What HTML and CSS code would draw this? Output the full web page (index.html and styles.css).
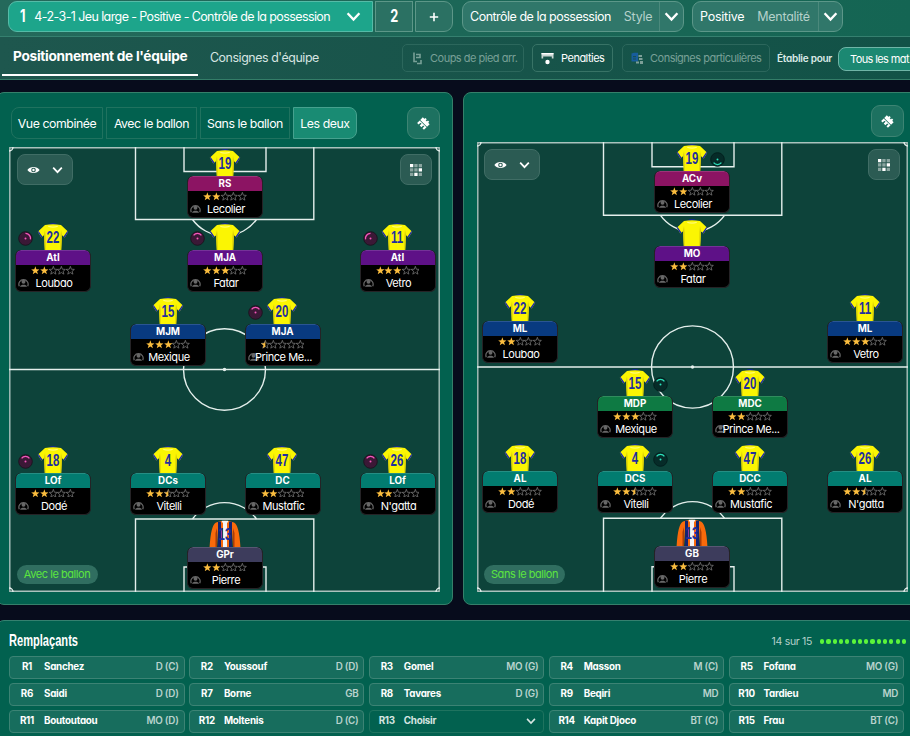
FILE: index.html
```html
<!DOCTYPE html>
<html lang="fr">
<head>
  <meta charset="UTF-8" />
  <meta name="viewport" content="width=device-width, initial-scale=1.0" />
  <title>Tactique</title>
  <link rel="stylesheet" href="styles.css">
</head>
<body>
  <svg class="defs" width="0" height="0">
    <defs>
      <symbol id="chevron" viewBox="0 0 14 10">
        <path d="M1.5 2 L7 7.8 L12.5 2" fill="none" stroke="currentColor" stroke-width="2.2"/>
      </symbol>
      <symbol id="eye" viewBox="0 0 14 8">
        <path fill-rule="evenodd" fill="currentColor" d="M.4 4 C3-.4 11-.4 13.6 4 C11 8.4 3 8.4 .4 4Z M7 1.5 A2.5 2.5 0 1 0 7 6.5 A2.5 2.5 0 1 0 7 1.5Z"/>
        <circle cx="7" cy="4" r="1.3" fill="currentColor"/>
      </symbol>
      <symbol id="dots" viewBox="0 0 12 12">
        <g fill="#fff">
          <path d="M0 0h3.3v3.3H0z M8.7 4.3H12v3.3H8.7z M4.3 8.7h3.3V12H4.3z"/>
          <path opacity=".45" d="M4.3 0h3.3v3.3H4.3z M8.7 0H12v3.3H8.7z M0 4.3h3.3v3.3H0z M4.3 4.3h3.3v3.3H4.3z M0 8.7h3.3V12H0z M8.7 8.7H12V12H8.7z"/>
        </g>
      </symbol>
      <symbol id="brush" viewBox="0 0 14 14">
        <g transform="rotate(45 7 7)" fill="#fff">
          <path d="M2.5 3.4h9v3.4h-9z M2.5 7.5h9v1h-9z M2.5 8.5h2v2.4h-2z M5.9 8.5h2.2v2.4H5.9z M9.5 8.5h2v2.4h-2z M4.6 2h1.7v1.6H4.6z M7.9 2h1.7v1.6H7.9z"/>
        </g>
      </symbol>
      <symbol id="head" viewBox="0 0 10 10">
        <path d="M1.2 8.4 A4.2 4.2 0 1 1 8.8 8.4" fill="none" stroke="#686868" stroke-width="1.1"/>
        <circle cx="5" cy="4.4" r="1.8" fill="#686868"/>
        <path d="M1.8 8.8 C2.6 6.4 7.4 6.4 8.2 8.8Z" fill="#686868"/>
      </symbol>
      <symbol id="star" viewBox="0 0 10 10">
        <path d="M5 .4 L6.2 3.7 L9.8 3.9 L7 6.1 L8 9.5 L5 7.5 L2 9.5 L3 6.1 L.2 3.9 L3.8 3.7Z"/>
      </symbol>
      <symbol id="shirt" viewBox="0 0 32 27">
        <path d="M11 1.6 Q16-.9 21 1.6Z" fill="#1622b4"/>
        <path d="M8 2 L.8 8.7 L4.3 14.6 L7 12.2 L7.8 27 H24.2 L25 12.2 L27.7 14.6 L31.2 8.7 L24 2 Q16 .3 8 2Z" fill="#fbf503"/>
        <path d="M.8 8.7 L4.3 14.6 L5.4 13.6 L1.6 7.9Z M31.2 8.7 L27.7 14.6 L26.6 13.6 L30.4 7.9Z" fill="#1622b4"/>
        <path d="M7 12.2 L8 7 L8.5 13 L8.6 27 H7.8Z M25 12.2 L24 7 L23.5 13 L23.4 27 H24.2Z" fill="#d5c90a"/>
        <path d="M11 3.8 Q16 5.8 21 3.8 L20.5 2.8 Q16 4.4 11.5 2.8Z" fill="#fffb70"/>
      </symbol>
      <symbol id="keeper" viewBox="0 0 32 27">
        <path d="M7 2.4 Q1.8 5 .6 27 H8 V10 L9 27 H23 L24 10 V27 H31.4 Q30.2 5 25 2.4 Q16-.8 7 2.4Z" fill="#f96a0b"/>
        <path d="M6.5 13 L8 8 V27 H6.5Z M25.5 13 L24 8 V27 H25.5Z" fill="#a83d08"/>
        <path d="M9 1.8h3V27H9z M20 1.8h3V27h-3z" fill="#13246e"/>
        <path d="M12 1.2h2V27h-2z M18 1.2h2V27h-2z" fill="#f96a0b"/>
        <path d="M14 .8h4V27h-4z M12.8.8h6.4v1.6h-6.4z" fill="#f4f4f4"/>
      </symbol>
    </defs>
  </svg>

  <header class="topbar">
    <div class="formations">
      <button class="formation active"><span class="slot">1</span><span class="formation-name">4-2-3-1 Jeu large - Positive - Contrôle de la possession</span><svg class="chev"><use href="#chevron"/></svg></button>
      <button class="formation small"><span class="slot">2</span></button>
      <button class="formation small last"><svg class="plus" viewBox="0 0 10 10"><path d="M5 .8V9.2M.8 5H9.2"/></svg></button>
    </div>
    <div class="picker style"><span class="value">Contrôle de la possession</span><span class="kind">Style</span><span class="drop"><svg class="chev"><use href="#chevron"/></svg></span></div>
    <div class="picker mentality"><span class="value">Positive</span><span class="kind">Mentalité</span><span class="drop"><svg class="chev"><use href="#chevron"/></svg></span></div>
  </header>

  <nav class="subbar">
    <a class="tab active"><span>Positionnement de l'équipe</span></a>
    <a class="tab"><span>Consignes d'équipe</span></a>
    <button class="action corners off">
      <svg width="9" height="13" viewBox="0 0 9 13"><path d="M1 .5V9.5H4M3 2.5H7V5.5H3M8 8V11.5H4" fill="none" stroke="currentColor" stroke-width="1.6"/></svg>
      <span>Coups de pied arr.</span>
    </button>
    <button class="action penalties">
      <svg width="13" height="13" viewBox="0 0 13 13"><path d="M.5 1H12.5V6.5H10.8V4.5H2.2V6.5H.5Z" fill="#c9d5d2"/><path d="M.5 1H12.5V2.4H.5Z" fill="#fff"/><circle cx="6.5" cy="10" r="2.2" fill="#fff"/></svg>
      <span>Penalties</span>
    </button>
    <button class="action special off">
      <svg width="13" height="13" viewBox="0 0 13 13"><path d="M.5 1.5L3 .8H7V9.5H.5Z" fill="#175d9c"/><path d="M2 4h3v1.2H2z M2 6.5h3v1H2z" fill="#174f55"/><path d="M7.5 3H11v2H7.5z M8 6h3.5v2H8z M5 9.5h3v2H5z M9 9h3v3H9z" fill="#7d9f98"/></svg>
      <span>Consignes particulières</span>
    </button>
    <span class="set-for">Établie pour</span>
    <button class="matches">Tous les mat</button>
  </nav>

  <main class="boards">
    <section class="panel with-ball">
      <div class="panel-head">
        <div class="views">
          <button class="v1"><span>Vue combinée</span></button>
          <button class="v2"><span>Avec le ballon</span></button>
          <button class="v3"><span>Sans le ballon</span></button>
          <button class="v4 active"><span>Les deux</span></button>
        </div>
        <button class="square"><svg width="15" height="15"><use href="#brush"/></svg></button>
      </div>
      <div class="pitch" id="pitch-with"></div>
    </section>

    <section class="panel without-ball">
      <div class="panel-head">
        <button class="square"><svg width="15" height="15"><use href="#brush"/></svg></button>
      </div>
      <div class="pitch" id="pitch-without"></div>
    </section>
  </main>

  <section class="subs">
    <div class="subs-head">
      <h2><svg width="74" height="22"><text x="0" y="16" textLength="69" lengthAdjust="spacingAndGlyphs">Remplaçants</text></svg></h2>
      <span class="count">14 sur 15</span>
      <div class="pips" id="pips"></div>
    </div>
    <div class="subs-grid" id="subs"></div>
  </section>

  <script src="script.js"></script>
</body>
</html>
```

FILE: styles.css
```css
* {
  box-sizing: border-box;
}

body {
  margin: 0;
  width: 910px;
  height: 736px;
  overflow: hidden;
  background: #070c1c;
  color: #fff;
  font-family: Inter, "Liberation Sans", sans-serif;
  font-feature-settings: "cv11";
  font-size: 12px;
}

button {
  font: inherit;
  font-feature-settings: inherit;
  color: inherit;
  background: none;
  border: 1px solid;
  padding: 0;
  display: flex;
  align-items: center;
  white-space: nowrap;
}

svg {
  display: block;
  flex: none;
}

.defs {
  position: absolute;
}

/* top bar */
.topbar {
  display: flex;
  height: 37px;
  padding: 1px 8px 0;
  background: linear-gradient(90deg, #24695b, #146553);
  border-bottom: 1px solid #35806f;
}

.formations {
  display: flex;
  gap: 2px;
  margin-right: 9px;
}

.formation {
  height: 31px;
  border-color: #5d9788;
  background: #2b7163;
}

.formation.active {
  width: 365px;
  padding: 0 11px 0 10px;
  background: #1da58b;
  border-color: #55bba7;
  border-radius: 9px 0 0 9px;
}

.formation.small {
  width: 38px;
  justify-content: center;
}

.formation.last {
  border-radius: 0 9px 9px 0;
}

.slot {
  font-weight: 700;
  font-size: 17px;
  transform: scaleX(.75);
  margin-top: -2px;
}

.formation-name {
  margin-left: 8px;
  font-size: 12.5px;
  letter-spacing: -.6px;
}

.formation.active .chev {
  margin-left: auto;
}

.chev {
  width: 15px;
  height: 11px;
}

.plus {
  width: 10px;
  height: 10px;
  stroke: #fff;
  stroke-width: 1.6;
}

.picker {
  display: flex;
  align-items: center;
  height: 31px;
  margin-right: 8px;
  padding-left: 7px;
  background: #30776a;
  border: 1px solid #5c9789;
  border-radius: 9px;
  font-size: 12.5px;
  letter-spacing: -.25px;
  white-space: nowrap;
}

.picker.style {
  width: 222px;
}

.style .value {
  letter-spacing: -.5px;
}

.picker.mentality {
  width: 151px;
}

.kind {
  margin-left: 13px;
  color: #b5d1ca;
}

.drop {
  display: flex;
  align-items: center;
  justify-content: center;
  align-self: stretch;
  width: 24px;
  margin-left: auto;
  border-left: 1px solid #4b897c;
}

/* second bar */
.subbar {
  display: flex;
  align-items: center;
  height: 43px;
  background: linear-gradient(90deg, #1e574e, #125247);
  border-bottom: 1px solid #347d68;
}

.tab {
  display: flex;
  align-items: center;
  height: 39px;
  font-size: 12.4px;
  letter-spacing: -.43px;
  color: #d7e5e2;
  white-space: nowrap;
  padding: 2px 0 0 12px;
  margin-bottom: 3px;
}

.tab.active {
  width: 196px;
  margin-left: 2px;
  padding: 0 0 0 11px;
  border-bottom: 2px solid #fff;
  font-size: 13.7px;
  font-weight: 700;
  letter-spacing: -.3px;
  color: #fff;
}

.action {
  height: 28px;
  border-color: #2c675c;
  border-radius: 5px;
  font-size: 11px;
  letter-spacing: -.5px;
  gap: 7px;
  padding-left: 10px;
}

.corners {
  width: 122px;
  margin-left: auto;
  gap: 8px;
}

.penalties {
  width: 81px;
  margin-left: 8px;
  padding-left: 8px;
  border-color: #387366;
}

.special {
  width: 148px;
  margin-left: 9px;
  padding-left: 8px;
  gap: 6px;
}

.action.off {
  color: #78a097;
}

.set-for {
  width: 61px;
  margin-left: 7px;
  font-size: 10px;
  font-weight: 600;
  letter-spacing: -.25px;
  white-space: nowrap;
  color: #dcebe7;
}

.matches {
  flex: none;
  width: 110px;
  height: 24px;
  margin: 1px -38px 0 0;
  padding-left: 11px;
  border-color: #70b5a7;
  border-radius: 8px;
  background: #1b8872;
  font-size: 11px;
  letter-spacing: -.6px;
}

/* boards */
.boards {
  display: flex;
  gap: 10px;
  margin: 12px 0 0 -4px;
}

.panel {
  flex: none;
  height: 513px;
  background: #02614f;
  border: 1px solid #35806a;
  border-radius: 8px;
  padding: 14px 12px 0;
}

.with-ball {
  width: 457px;
}

.without-ball {
  width: 456px;
  padding-top: 12px;
}

.panel-head {
  display: flex;
  justify-content: space-between;
  height: 40px;
}

.with-ball .panel-head {
  padding-left: 2px;
}

.without-ball .panel-head {
  justify-content: flex-end;
  height: 37px;
  padding-right: 2px;
}

.views {
  display: flex;
  gap: 3px;
}

.views button {
  width: 91px;
  height: 32px;
  justify-content: center;
  border-color: #20725f;
  font-size: 12.3px;
  letter-spacing: -.43px;
}

.views .v1 {
  width: 92px;
  border-radius: 8px 0 0 8px;
}

.views .v3 {
  width: 90px;
}

.views .v4 {
  width: 64px;
  border-radius: 0 8px 8px 0;
}

.views .active {
  background: #198b73;
  border-color: #46a18e;
}

.square {
  width: 33px;
  height: 32px;
  justify-content: center;
  background: #1d7160;
  border-color: #3d8473;
  border-radius: 9px;
}

.pitch {
  position: relative;
  width: 431px;
  height: 445px;
  background: #0d433a;
}

.without-ball .pitch {
  height: 450px;
  margin-left: .5px;
}

.lines {
  width: 100%;
  height: 100%;
  fill: none;
  stroke: #e4efec;
  stroke-width: 1.4;
}

.lines path,
.lines rect,
.lines ellipse {
  vector-effect: non-scaling-stroke;
}

.lines .edge {
  stroke: #a9c3bd;
}

.pitch-tools {
  position: absolute;
  inset: 7px 8px auto 7.5px;
  display: flex;
  justify-content: space-between;
}

.pitch-tools button {
  width: 32px;
  height: 31px;
  justify-content: center;
  gap: 12px;
  background: #2b5b53;
  border-color: #406d65;
  border-radius: 8px;
}

.pitch-tools .look {
  width: 56px;
}

.look .chev {
  width: 11px;
  height: 8px;
}

.phase {
  position: absolute;
  left: 7.5px;
  bottom: 8px;
  width: 81px;
  height: 19px;
  border-radius: 10px;
  background: #306e60;
  color: #5ce63e;
  font-size: 11px;
  letter-spacing: -.45px;
  line-height: 18px;
  text-align: center;
}

/* players */
.player {
  position: absolute;
  width: 76px;
}

.jersey {
  width: 32px;
  height: 27px;
  margin: 0 auto 0 21.5px;
}

.jersey text {
  font-family: "Liberation Sans Narrow", "Liberation Sans", sans-serif;
  font-weight: 700;
  font-size: 16.5px;
  fill: #1f2f9e;
  text-anchor: middle;
}

.role {
  position: absolute;
  top: 8px;
  left: 3px;
  width: 15px;
  height: 15px;
}

.role.right {
  left: 56px;
}

.card {
  height: 42px;
  border: 1px solid #252326;
  border-top: 0;
  border-radius: 6px;
  background: #000;
  overflow: hidden;
}

.pos {
  height: 15px;
  margin: 0 -1px;
  border: 1px solid rgba(255, 255, 255, .14);
  border-bottom: 0;
  border-radius: 6px 6px 0 0;
  font-size: 9.8px;
  font-weight: 700;
  line-height: 13px;
  text-align: center;
}

.st { background: #8c1463; }
.am { background: #5e1187; }
.cm { background: #083a80; }
.dm { background: #0e7a43; }
.df { background: #027c70; }
.gk { background: #3d3c5c; }

.stars {
  display: flex;
  justify-content: center;
  padding-top: 1px;
  height: 10px;
}

.stars > svg {
  width: 8.7px;
  height: 8.7px;
}

.full {
  fill: #fbbd3e;
}

.empty {
  fill: none;
  stroke: #858585;
  stroke-width: .8;
}

.who {
  display: flex;
  align-items: center;
  height: 16px;
}

.who svg {
  width: 11px;
  height: 11px;
  margin: -1px 0 0 2px;
}

.who span {
  width: 70px;
  margin-left: -10px;
  font-size: 11px;
  letter-spacing: -.42px;
  line-height: 16px;
  text-align: center;
  white-space: nowrap;
}

/* substitutes */
.subs {
  height: 130px;
  margin: 15px -6px 0 -4px;
  padding: 8px 12px;
  background: #02614f;
  border: 1px solid #35806f;
  border-radius: 8px;
}

.subs-head {
  display: flex;
  align-items: center;
  height: 24px;
  margin-bottom: 3px;
}

.subs h2 {
  margin: 0 auto 0 0;
}

.subs h2 svg {
  overflow: visible;
}

.subs h2 text {
  font-family: "Liberation Sans Narrow", "Liberation Sans", sans-serif;
  font-size: 16.5px;
  font-weight: 700;
  fill: #fff;
}

.count {
  font-size: 10.5px;
  letter-spacing: -.3px;
  color: #b4d0ca;
}

.pips {
  display: flex;
  gap: 2.1px;
  margin: 1px -3px 0 8px;
}

.pips i {
  width: 4.2px;
  height: 4.2px;
  border-radius: 50%;
  background: #5bf53a;
}

.subs-grid {
  display: grid;
  grid-template-columns: repeat(5, 175.6px);
  gap: 4px 4.3px;
}

.sub {
  display: flex;
  align-items: center;
  height: 23px;
  padding: 0 5px 2px 0;
  background: #176d5d;
  border: 1px solid #3c8374;
  border-radius: 4px;
  font-size: 9.8px;
  font-weight: 700;
  letter-spacing: -.25px;
}

.sub .num {
  width: 34px;
  text-align: center;
}

.sub .where {
  margin-left: auto;
  font-weight: 600;
  color: #b9d3cd;
}

.sub.open {
  background: #02614f;
  border-color: #1f735f;
  color: #d5e5e1;
}

.sub.open .chev {
  width: 10px;
  height: 8px;
  margin: 0 2px 0 auto;
}
```

FILE: script.js
```js
// x, y: top left of the player inside the pitch
const withBall = [
  { x: 178, y: 2, n: 19, pos: "RS", line: "st", stars: 2, name: "Lecolier" },
  { x: 6, y: 76, n: 22, pos: "AtI", line: "am", stars: 2, name: "Loubao", role: "pink", turn: 50 },
  { x: 178, y: 76, n: "", pos: "MJA", line: "am", stars: 3, name: "Fatar", role: "pink", turn: 0 },
  { x: 350.5, y: 76, n: 11, pos: "AtI", line: "am", stars: 3, name: "Vetro", role: "pink", turn: -50 },
  { x: 121, y: 150, n: 15, pos: "MJM", line: "cm", stars: 3, name: "Mexique" },
  { x: 235.5, y: 150, n: 20, pos: "MJA", line: "cm", stars: 0.5, name: "Prince Me...", role: "pink", turn: 0 },
  { x: 6, y: 298.5, n: 18, pos: "LOf", line: "df", stars: 2, name: "Dodé", role: "pink", turn: 0 },
  { x: 121, y: 298.5, n: 4, pos: "DCs", line: "df", stars: 2.5, name: "Vitelli" },
  { x: 235.5, y: 298.5, n: 47, pos: "DC", line: "df", stars: 2, name: "Mustafic" },
  { x: 350.5, y: 298.5, n: 26, pos: "LOf", line: "df", stars: 2, name: "N'gatta", role: "pink", turn: 0 },
  { x: 178, y: 372.5, n: 13, pos: "GPr", line: "gk", stars: 2, name: "Pierre" }
];

const withoutBall = [
  { x: 177.5, y: 2, n: 19, pos: "ACv", line: "st", stars: 2, name: "Lecolier", role: "teal", turn: 180 },
  { x: 177.5, y: 77, n: "", pos: "MO", line: "am", stars: 2, name: "Fatar" },
  { x: 5.5, y: 152, n: 22, pos: "ML", line: "cm", stars: 2, name: "Loubao" },
  { x: 350.5, y: 152, n: 11, pos: "ML", line: "cm", stars: 3, name: "Vetro" },
  { x: 120.5, y: 227, n: 15, pos: "MDP", line: "dm", stars: 3, name: "Mexique", role: "teal", turn: 0 },
  { x: 235.5, y: 227, n: 20, pos: "MDC", line: "dm", stars: 2, name: "Prince Me..." },
  { x: 5.5, y: 302, n: 18, pos: "AL", line: "df", stars: 2, name: "Dodé" },
  { x: 120.5, y: 302, n: 4, pos: "DCS", line: "df", stars: 2.5, name: "Vitelli", role: "teal", turn: 0 },
  { x: 235.5, y: 302, n: 47, pos: "DCC", line: "df", stars: 2, name: "Mustafic" },
  { x: 350.5, y: 302, n: 26, pos: "AL", line: "df", stars: 2.5, name: "N'gatta" },
  { x: 177.5, y: 377, n: 13, pos: "GB", line: "gk", stars: 2, name: "Pierre" }
];

const subs = [
  ["Sanchez", "D (C)"], ["Youssouf", "D (D)"], ["Gomel", "MO (G)"], ["Masson", "M (C)"], ["Fofana", "MO (G)"],
  ["Saidi", "D (D)"], ["Borne", "GB"], ["Tavares", "D (G)"], ["Beqiri", "MD"], ["Tardieu", "MD"],
  ["Boutoutaou", "MO (D)"], ["Moltenis", "D (C)"], ["Choisir", null], ["Kapit Djoco", "BT (C)"], ["Frau", "BT (C)"]
];

const lines = `
  <svg class="lines" viewBox="0 0 431 445" preserveAspectRatio="none">
    <rect class="edge" x=".8" y=".8" width="429.4" height="443.4"/>
    <path d="M0 222.5H431"/>
    <ellipse cx="215.5" cy="222.5" rx="41" ry="40.7"/>
    <path d="M126.5 0V72.5H304.8V0 M175 0V24.5H257V0"/>
    <path d="M126.5 445V372H304.8V445 M175 445V420H257V445"/>
    <path d="M183.5 72.5A39.5 39.5 0 0 0 247.5 72.5 M183.5 372A39.5 39.5 0 0 1 247.5 372"/>
    <path d="M0 4A4 4 0 0 0 4 0 M427 0A4 4 0 0 0 431 4 M0 441A4 4 0 0 1 4 445 M431 441A4 4 0 0 0 427 445"/>
    <circle cx="215.5" cy="222.5" r="1" fill="#fff"/>
  </svg>`;

function starRow(count) {
  let html = "";
  for (let i = 0; i < 5; i++) {
    const left = count - i;
    if (left >= 1) {
      html += `<svg class="full"><use href="#star"/></svg>`;
    } else if (left === 0.5) {
      html += `<svg viewBox="0 0 10 10"><use class="empty" href="#star"/><svg width="5" height="10" viewBox="0 0 5 10"><use class="full" href="#star" width="10" height="10"/></svg></svg>`;
    } else {
      html += `<svg class="empty"><use href="#star"/></svg>`;
    }
  }
  return html;
}

function roleBadge(p) {
  if (!p.role) return "";
  const pink = p.role === "pink";
  return `
    <svg class="role ${pink ? "left" : "right"}" viewBox="0 0 15 15">
      <circle cx="7.5" cy="7.5" r="6.8" fill="${pink ? "#3b1836" : "#062b28"}" stroke="${pink ? "#1c1620" : "#03201e"}"/>
      <path d="M3.6 4.3A5 5 0 0 1 11.4 4.3" fill="none" stroke="${pink ? "#f557bb" : "#2be0ba"}" stroke-width="1.3" transform="rotate(${p.turn} 7.5 7.5)"/>
      <circle cx="7.5" cy="7.5" r="1" fill="${pink ? "#f557bb" : "#2be0ba"}"/>
    </svg>`;
}

function playerHtml(p) {
  return `
    <div class="player" style="left:${p.x}px;top:${p.y}px">
      ${roleBadge(p)}
      <svg class="jersey" viewBox="0 0 32 27">
        <use href="#${p.line === "gk" ? "keeper" : "shirt"}"/>
        <text transform="translate(16 20.4) scale(.7 1)">${p.n}</text>
      </svg>
      <div class="card">
        <div class="pos ${p.line}">${p.pos}</div>
        <div class="stars">${starRow(p.stars)}</div>
        <div class="who"><svg><use href="#head"/></svg><span>${p.name}</span></div>
      </div>
    </div>`;
}

function drawPitch(id, players, phase) {
  document.getElementById(id).innerHTML = `
    ${lines}
    <div class="pitch-tools">
      <button class="look"><svg width="13" height="8"><use href="#eye"/></svg><svg class="chev"><use href="#chevron"/></svg></button>
      <button><svg width="12" height="12"><use href="#dots"/></svg></button>
    </div>
    ${players.map(playerHtml).join("")}
    <div class="phase">${phase}</div>`;
}

drawPitch("pitch-with", withBall, "Avec le ballon");
drawPitch("pitch-without", withoutBall, "Sans le ballon");

document.getElementById("pips").innerHTML = "<i></i>".repeat(14);

document.getElementById("subs").innerHTML = subs.map(([name, where], i) => `
  <div class="sub${where ? "" : " open"}">
    <span class="num">R${i + 1}</span>
    <span>${name}</span>
    ${where ? `<span class="where">${where}</span>` : `<svg class="chev"><use href="#chevron"/></svg>`}
  </div>`).join("");
```
